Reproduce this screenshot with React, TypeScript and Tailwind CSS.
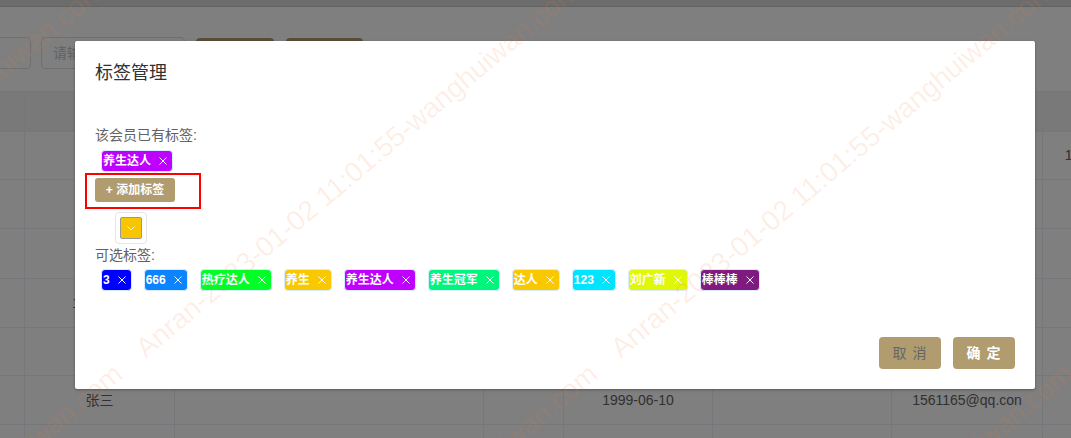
import React from "react";

type Tag = { label: string; color: string };

const optionalTags: Tag[] = [
  { label: "3", color: "#0000ff" },
  { label: "666", color: "#0d84ff" },
  { label: "热疗达人", color: "#00ff26" },
  { label: "养生", color: "#f9c800" },
  { label: "养生达人", color: "#be00ff" },
  { label: "养生冠军", color: "#00f57d" },
  { label: "达人", color: "#f9c800" },
  { label: "123", color: "#00e4ff" },
  { label: "刘广新", color: "#e1f70a" },
  { label: "棒棒棒", color: "#7f1a80" },
];

const colWidths = [25, 150, 309, 80, 149, 179, 151, 60];
const rowHeights = [48, 49, 50, 49, 48, 49, 49];

// row index -> { column index: text }
const rowData: Record<number, Record<number, string>> = {
  0: { 7: "15" },
  3: { 1: "1234567" },
  5: { 1: "张三", 4: "1999-06-10", 6: "1561165@qq.con" },
};

const WATERMARK = "Anran-2023-01-02 11:01:55-wanghuiwan.com";
const marks = [-335, 140, 615, 1090];

function CloseIcon() {
  return (
    <svg width="16" height="16" viewBox="0 0 16 16" className="shrink-0">
      <path d="M4.5 4.5 L11.5 11.5 M11.5 4.5 L4.5 11.5" stroke="#fff" strokeWidth="1" fill="none" />
    </svg>
  );
}

function TagChip({ tag }: { tag: Tag }) {
  return (
    <div
      className="flex items-center h-[22px] pl-[1px] pr-[1px] rounded-[4px] border border-[#d9ecff] text-white text-[12px] font-bold leading-[20px]"
      style={{ backgroundColor: tag.color }}
    >
      <span>{tag.label}</span>
      <span className="ml-[4px] flex">
        <CloseIcon />
      </span>
    </div>
  );
}

function BackgroundPage() {
  return (
    <div className="absolute inset-0 bg-white">
      <div className="h-[7px] bg-[#d9d9d9] border-b border-[#c6c6c6]" />
      <div className="flex items-start pt-[30px]">
        <div className="-ml-[150px] w-[181px] h-[32px] border border-[#dcdfe6] rounded-[4px]" />
        <div className="ml-[10px] w-[144px] h-[32px] border border-[#dcdfe6] rounded-[4px] pl-[11px] flex items-center text-[14px] text-[#c0c4cc]">
          请输入
        </div>
        <div className="ml-[11px] mt-[1px] w-[78px] h-[32px] rounded-[4px] bg-[#b09c6e]" />
        <div className="ml-[12px] mt-[1px] w-[77px] h-[32px] rounded-[4px] bg-[#b09c6e]" />
      </div>
      <div className="mt-[21px] border-t border-[#ebeef5]">
        <div className="flex h-[40px] bg-[#f2f3f5] border-b border-[#ebeef5]">
          {colWidths.map((w, i) => (
            <div key={i} className="shrink-0 border-r border-[#ebeef5]" style={{ width: w }} />
          ))}
        </div>
        {rowHeights.map((h, r) => (
          <div key={r} className="flex border-b border-[#ebeef5]" style={{ height: h }}>
            {colWidths.map((w, c) => (
              <div
                key={c}
                className="shrink-0 border-r border-[#ebeef5] flex items-center justify-center whitespace-nowrap overflow-visible text-[14px] text-[#606266]"
                style={{ width: w }}
              >
                {rowData[r]?.[c] ?? ""}
              </div>
            ))}
          </div>
        ))}
      </div>
    </div>
  );
}

function Dialog() {
  return (
    <div className="absolute left-[75px] top-[41px] w-[960px] h-[348px] bg-white rounded-[2px] shadow-[0_1px_3px_rgba(0,0,0,0.3)] flex flex-col">
      <div className="px-[20px] pt-[20px] pb-[10px] text-[18px] leading-[24px] text-[#303133]">标签管理</div>
      <div className="px-[20px] pt-[30px] text-[14px] text-[#606266]">
        <div className="leading-[20px]">该会员已有标签:</div>
        <div className="mt-[5px] ml-[6px] flex">
          <TagChip tag={{ label: "养生达人", color: "#be00ff" }} />
        </div>
        <div className="mt-[6px] flex">
          <button className="w-[80px] h-[24px] rounded-[3px] bg-[#b09c6e] text-white text-[12px] font-semibold leading-[24px]">
            + 添加标签
          </button>
        </div>
        <div className="mt-[10px] ml-[20px] w-[32px] h-[32px] border border-[#e6e6e6] rounded-[4px] p-[4px]">
          <div className="w-full h-full border border-[#999] rounded-[2px] bg-[#f7c600] flex items-center justify-center">
            <svg width="10" height="10" viewBox="0 0 10 10">
              <path d="M1.5 3.5 L5 7 L8.5 3.5" stroke="#fff" strokeWidth="1" fill="none" />
            </svg>
          </div>
        </div>
        <div className="mt-[1px] leading-[20px]">可选标签:</div>
        <div className="mt-[4px] ml-[6px] flex gap-[12px]">
          {optionalTags.map((t, i) => (
            <TagChip key={i} tag={t} />
          ))}
        </div>
      </div>
      <div className="mt-auto flex justify-end gap-[12px] px-[20px] pb-[20px]">
        <button className="w-[62px] h-[32px] rounded-[4px] bg-[#b09c6e] text-[14px] text-[#666] tracking-[1px]">取 消</button>
        <button className="w-[62px] h-[32px] rounded-[4px] bg-[#b09c6e] text-[14px] text-white font-bold tracking-[1px]">确 定</button>
      </div>
      {/* annotation box */}
      <div className="absolute left-[10px] top-[132px] w-[116px] h-[36px] border-2 border-[#ff0000]" />
    </div>
  );
}

function Watermark() {
  return (
    <div className="absolute inset-0 pointer-events-none font-['Liberation_Sans',sans-serif] text-[28px] text-[rgba(245,120,50,0.12)]">
      {marks.map((x, i) => (
        <div key={i} className="absolute w-0 h-0" style={{ left: x, top: 352 }}>
          <div className="absolute left-0 top-[-16px] h-[32px] leading-[32px] whitespace-nowrap origin-[0_50%] rotate-[-40deg]">
            <span className="absolute right-[calc(100%+28px)]">{WATERMARK}</span>
            <span>{WATERMARK}</span>
          </div>
        </div>
      ))}
    </div>
  );
}

export default function App() {
  return (
    <div className="relative w-[1071px] h-[438px] overflow-hidden font-['Liberation_Sans','Noto_Sans_CJK_SC',sans-serif]">
      <BackgroundPage />
      <div className="absolute inset-0 bg-black/50" />
      <Dialog />
      <Watermark />
    </div>
  );
}
